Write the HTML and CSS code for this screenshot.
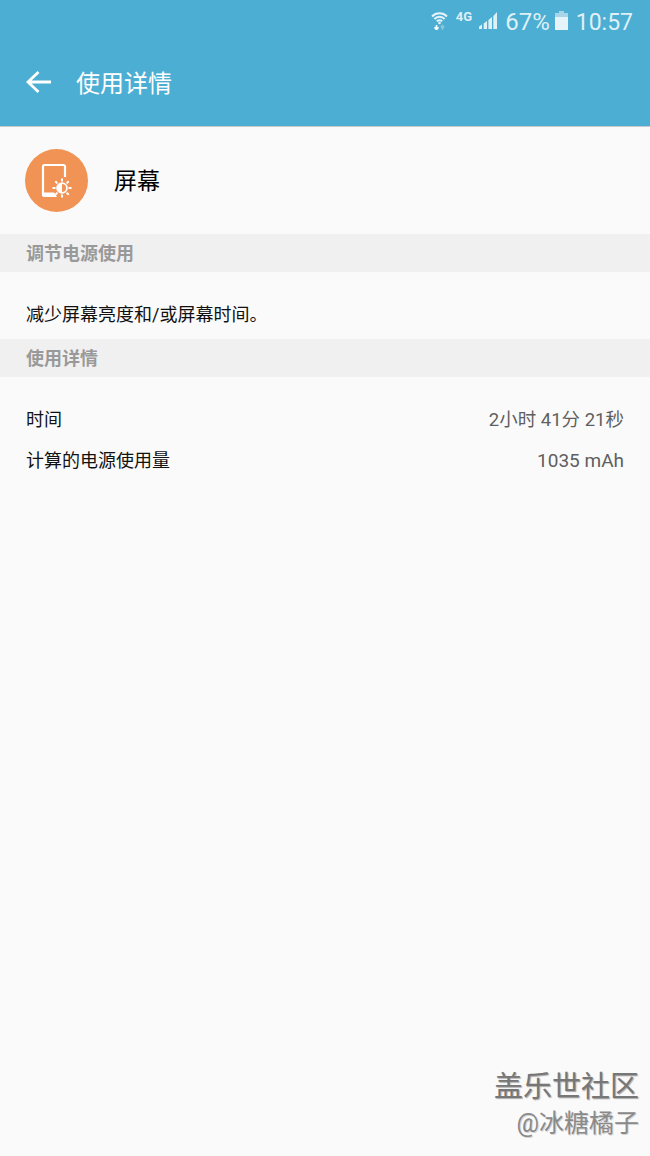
FILE: index.html
```html
<!DOCTYPE html>
<html lang="zh">
<head>
  <meta charset="UTF-8">
  <meta name="viewport" content="width=device-width, initial-scale=1.0">
  <title>使用详情</title>
  <link rel="stylesheet" href="styles.css">
</head>
<body>
  <div class="screen">
    <header class="app-header">
      <div class="status-bar">
        <svg class="ic-wifi" width="17" height="19" viewBox="0 0 17 19">
          <path d="M1 5.500 A10.500 10.500 0 0 1 16 5.500" fill="none" stroke="#e6f3f8" stroke-width="2"/>
          <path d="M3.400 8 A7 7 0 0 1 13.600 8" fill="none" stroke="#e6f3f8" stroke-width="2"/>
          <path d="M5.800 10.400 A3.800 3.800 0 0 1 11.200 10.400" fill="none" stroke="#e6f3f8" stroke-width="1.800"/>
          <circle cx="8.500" cy="12" r="1.300" fill="#e6f3f8"/>
          <path d="M5.500 14v4.500M3.500 16.300 5.500 18.800l2-2.500" fill="none" stroke="#fff" stroke-width="1.500"/>
          <path d="M11.500 19v-4.500M9.800 16.500 11.500 14.500l1.700 2" fill="none" stroke="#8cc6dd" stroke-width="1.500"/>
        </svg>
        <span class="net-label">4G</span>
        <svg class="ic-signal" width="18" height="18" viewBox="0 0 18 18">
          <path d="M0 15.500 3 13.500V18H0zM4.700 12.500 8 10v8H4.700zM9.400 9 13 6v12H9.400zM14.300 5 18 1v17h-3.700z" fill="#dff0f6"/>
        </svg>
        <span class="status-text pct">67%</span>
        <svg class="ic-battery" width="13" height="19" viewBox="0 0 13 19">
          <path d="M4 0h5v2h4v17H0V2h4z" fill="#a5d5e6"/>
          <path d="M0 6h13v13H0z" fill="#e6f3f8"/>
        </svg>
        <span class="status-text clock">10:57</span>
      </div>
      <div class="title-bar">
        <svg class="ic-back" width="28" height="24" viewBox="0 0 28 24">
          <path d="M3 12h23M13.500 2 3 12l10.500 10" fill="none" stroke="#fff" stroke-width="2.800"/>
        </svg>
        <h1>使用详情</h1>
      </div>
    </header>

    <section class="app-row">
      <div class="app-icon">
        <svg width="40" height="40" viewBox="0 0 40 40">
          <path d="M19 35H7.500A1.500 1.500 0 0 1 6 33.500V5.500A1.500 1.500 0 0 1 7.500 4h19A1.500 1.500 0 0 1 28 5.500V16" fill="none" stroke="#fff" stroke-width="2.200"/>
          <path d="M7 31.500h10l3 4.500H7z" fill="#fff"/>
          <circle cx="25" cy="27" r="5.800" fill="#fff"/>
          <path d="M25 23a4 4 0 0 1 0 8z" fill="#f09354"/>
          <path d="M25 17.500v3M25 33.500v3M15.500 27h3M31.500 27h3M18.300 20.300l2.100 2.100M29.600 31.600l2.100 2.100M31.700 20.300l-2.100 2.100M20.400 31.600l-2.100 2.100" stroke="#fff" stroke-width="2"/>
        </svg>
      </div>
      <span class="app-name">屏幕</span>
    </section>

    <div class="section-head">调节电源使用</div>
    <p class="tip">减少屏幕亮度和/或屏幕时间。</p>

    <div class="section-head">使用详情</div>
    <div class="details">
      <div class="detail-row">
        <span class="detail-label">时间</span>
        <span class="detail-value">2小时 41分 21秒</span>
      </div>
      <div class="detail-row">
        <span class="detail-label">计算的电源使用量</span>
        <span class="detail-value detail-number">1035 mAh</span>
      </div>
    </div>

    <div class="watermark">
      <div class="wm-site">盖乐世社区</div>
      <div class="wm-user">@冰糖橘子</div>
    </div>
  </div>
</body>
</html>
```

FILE: styles.css
```css
html, body {
  margin: 0;
  padding: 0;
}

body {
  font-family: Roboto, "Noto Sans CJK SC", sans-serif;
  background-color: #fafafa;
}

.screen {
  position: relative;
  width: 650px;
  height: 1156px;
  overflow: hidden;
  background-color: #fafafa;
}

.app-header {
  height: 126px;
  background-color: #4daed3;
  border-bottom: 1px solid #c4c9cb;
}

.status-bar {
  display: flex;
  align-items: center;
  justify-content: flex-end;
  height: 40px;
  padding-right: 17px;
  color: #dff0f6;
}

.ic-wifi {
  margin-right: 8px;
}

.net-label {
  font-size: 13px;
  font-weight: 700;
  margin-right: 7px;
  margin-bottom: 8px;
}

.ic-signal {
  margin-right: 8px;
}

.status-text {
  padding-top: 4px;
  font-size: 23px;
}

.pct {
  font-size: 24px;
}

.ic-battery {
  margin: 0 8px 0 5px;
}

.title-bar {
  display: flex;
  align-items: center;
  height: 84px;
  padding-left: 25px;
}

.ic-back {
  margin-right: 23px;
}

h1 {
  margin: 0;
  padding-top: 4px;
  font-size: 24px;
  line-height: 30px;
  font-weight: 400;
  color: #fff;
}

.app-row {
  display: flex;
  align-items: center;
  height: 107px;
  padding-left: 25px;
}

.app-icon {
  display: flex;
  align-items: center;
  justify-content: center;
  width: 63px;
  height: 63px;
  margin-right: 26px;
  border-radius: 50%;
  background-color: #f09354;
}

.app-name {
  padding-bottom: 4px;
  font-size: 23px;
  color: #000;
}

.section-head {
  height: 38px;
  line-height: 40px;
  padding-left: 26px;
  font-size: 18px;
  font-weight: 700;
  color: #999;
  background-color: #f0f0f0;
}

.tip {
  margin: 0;
  height: 67px;
  box-sizing: border-box;
  padding: 30px 0 0 26px;
  font-size: 18px;
  line-height: 26px;
  color: #111;
}

.details {
  padding: 22px 26px 0 26px;
}

.detail-row {
  display: flex;
  justify-content: space-between;
  align-items: baseline;
  height: 41px;
  line-height: 41px;
  font-size: 18px;
}

.detail-label {
  color: #111;
}

.detail-value {
  font-size: 18.500px;
  color: #5f5f5f;
}

.detail-number {
  font-size: 19px;
}

.watermark {
  position: absolute;
  right: 11px;
  bottom: 14px;
  text-align: right;
}

.wm-site {
  font-size: 29px;
  font-weight: 400;
  line-height: 38px;
  color: #777;
  text-shadow: 1px 1px 1px #aaa;
}

.wm-user {
  font-size: 25px;
  line-height: 36px;
  color: #8a8a8a;
  text-shadow: 1px 1px 0 #d5d5d5;
}
```
